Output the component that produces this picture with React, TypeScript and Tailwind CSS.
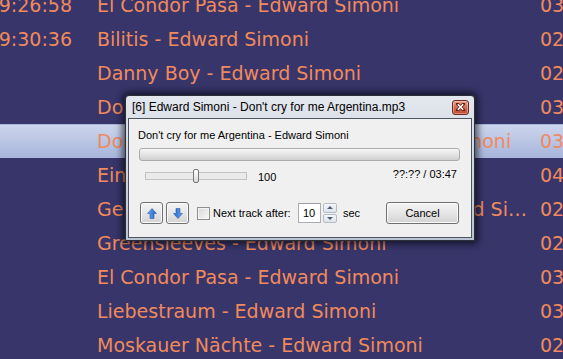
import React from 'react';

const rows = [
  { time: '19:26:58', title: 'El Condor Pasa - Edward Simoni', len: '03:08' },
  { time: '19:30:36', title: 'Bilitis - Edward Simoni', len: '02:51' },
  { time: '', title: 'Danny Boy - Edward Simoni', len: '02:58' },
  { time: '', title: 'Dona Dona - Edward Simoni', len: '03:05' },
  { time: '', title: "Don't cry for me Argentina - Edward Simoni", len: '03:47' },
  { time: '', title: 'Einsamer Hirte - Edward Simoni', len: '04:02' },
  { time: '', title: "Gern hab' ich die Frau'n geküßt - Edward Simoni", len: '02:44' },
  { time: '', title: 'Greensleeves - Edward Simoni', len: '02:39' },
  { time: '', title: 'El Condor Pasa - Edward Simoni', len: '03:08' },
  { time: '', title: 'Liebestraum - Edward Simoni', len: '03:21' },
  { time: '', title: 'Moskauer Nächte - Edward Simoni', len: '02:55' },
];

function Arrow({ down }: { down?: boolean }) {
  return (
    <svg width="10" height="11" viewBox="0 0 10 11" className={down ? 'rotate-180' : ''}>
      <defs>
        <linearGradient id={down ? 'ad' : 'au'} x1="0" y1="0" x2="1" y2="0">
          <stop offset="0" stopColor="#6fa8f0" />
          <stop offset="1" stopColor="#1f62c9" />
        </linearGradient>
      </defs>
      <path d="M5 0.5 L9.5 5.5 H7 V10.5 H3 V5.5 H0.5 Z" fill={`url(#${down ? 'ad' : 'au'})`} stroke="#2a5fae" strokeWidth="0.6" />
    </svg>
  );
}

function CloseButton() {
  return (
    <div className="flex h-[15px] w-[17px] items-center justify-center rounded-[3px] border border-[#6e2c20] bg-linear-to-b from-[#e9a08b] via-[#d06a52] to-[#c2482f] shadow-[inset_0_0_0_1px_rgba(255,255,255,0.35)]">
      <svg width="9" height="8" viewBox="0 0 9 8">
        <path d="M1.5 1 L7.5 7 M7.5 1 L1.5 7" stroke="#5a1f14" strokeWidth="3" strokeLinecap="square" />
        <path d="M1.8 1.3 L7.2 6.7 M7.2 1.3 L1.8 6.7" stroke="#ffffff" strokeWidth="1.6" />
      </svg>
    </div>
  );
}

function Dialog() {
  const btn = 'flex items-center justify-center rounded-[3px] border border-[#707070] bg-linear-to-b from-[#f4f4f4] via-[#e6e6e6] to-[#d3d3d3] shadow-[inset_0_0_0_1px_#fbfbfb]';
  return (
    <div className="absolute left-[125px] top-[95px] flex h-[146px] w-[350px] flex-col rounded-t-[4px] border border-[#2b2e36] bg-linear-to-b from-[#e3e7ee] to-[#bac3d2] pb-[2px] pl-[2px] pr-[2px] font-['Liberation_Sans',Arial,sans-serif] text-black shadow-[0_0_7px_3px_rgba(0,0,0,0.6)]">
      <div className="flex h-[22px] shrink-0 items-center justify-between pl-[4px] pr-[3px]">
        <span className="whitespace-nowrap text-[12px] leading-none">[6] Edward Simoni - Don't cry for me Argentina.mp3</span>
        <CloseButton />
      </div>
      <div className="flex flex-1 flex-col border border-[#4d5360] bg-[#f0f0f0] text-[11px] leading-[13px]">
        <div className="ml-[9px] mt-[10px] whitespace-nowrap">Don't cry for me Argentina - Edward Simoni</div>
        <div className="ml-[10px] mt-[6px] h-[13px] w-[321px] rounded-[3px] border border-[#acacac] bg-linear-to-b from-[#f6f6f6] via-[#e4e4e4] to-[#d0d0d0]" />
        <div className="mt-[7px] flex h-[16px] items-center">
          <div className="relative ml-[16px] h-[16px] w-[102px]">
            <div className="absolute left-0 right-0 top-[4px] h-[8px] border border-[#c3c3c3] bg-[#e9ebeb]" />
            <div className="absolute left-[48px] top-[1px] h-[14px] w-[6px] rounded-[2px] border border-[#767676] bg-linear-to-b from-[#ffffff] to-[#d9d9d9]" />
          </div>
          <span className="ml-[11px] mt-[2px]">100</span>
          <span className="ml-auto mr-[14px] -mt-[4px] whitespace-nowrap">??:?? / 03:47</span>
        </div>
        <div className="ml-[11px] mt-[18px] flex h-[22px] items-center">
          <div className={`${btn} h-[22px] w-[23px]`}>
            <Arrow />
          </div>
          <div className={`${btn} ml-[3px] h-[22px] w-[23px]`}>
            <Arrow down />
          </div>
          <div className="ml-[8px] h-[13px] w-[13px] border border-[#8e8f8f] bg-linear-to-br from-[#d8d8d8] to-[#f8f8f8] shadow-[inset_0_0_0_1px_#f4f4f4]" />
          <span className="ml-[3px] w-[85px] whitespace-nowrap">Next track after:</span>
          <div className="flex h-[20px] w-[23px] items-center border border-[#abadb3] border-t-[#9da0a8] bg-white pl-[4px]">10</div>
          <div className="ml-[2px] flex h-[20px] w-[14px] flex-col gap-[1px]">
            <div className="flex flex-1 items-center justify-center rounded-[2px] border border-[#b6bcc6] bg-linear-to-b from-[#f5f6f8] to-[#dfe3e9]">
              <div className="h-0 w-0 border-x-[3px] border-b-[3px] border-x-transparent border-b-[#4b5e80]" />
            </div>
            <div className="flex flex-1 items-center justify-center rounded-[2px] border border-[#b6bcc6] bg-linear-to-b from-[#f5f6f8] to-[#dfe3e9]">
              <div className="h-0 w-0 border-x-[3px] border-t-[3px] border-x-transparent border-t-[#4b5e80]" />
            </div>
          </div>
          <span className="ml-[6px]">sec</span>
          <div className={`${btn} ml-auto mr-[12px] h-[22px] w-[73px] text-[11px]`}>Cancel</div>
        </div>
      </div>
    </div>
  );
}

export default function App() {
  return (
    <div className="relative h-[359px] w-[563px] overflow-hidden bg-[#37356a] font-['DejaVu_Sans',sans-serif] text-[19px] text-[#f08a5c]">
      <div className="-mt-[12px] flex flex-col">
        {rows.map((r, i) => (
          <div
            key={i}
            className={
              i === 4
                ? 'flex h-[34px] shrink-0 items-center border-y border-[#a9b6de] bg-linear-to-b from-[#cdd5ec] to-[#a8b6dc]'
                : 'flex h-[34px] shrink-0 items-center'
            }
          >
            <span className="flex w-[72px] shrink-0 justify-end whitespace-nowrap">{r.time}</span>
            <span className="ml-[25px] w-[430px] shrink-0 truncate">{r.title}</span>
            <span className="ml-[13px] shrink-0 whitespace-nowrap">{r.len}</span>
          </div>
        ))}
      </div>
      <Dialog />
    </div>
  );
}
